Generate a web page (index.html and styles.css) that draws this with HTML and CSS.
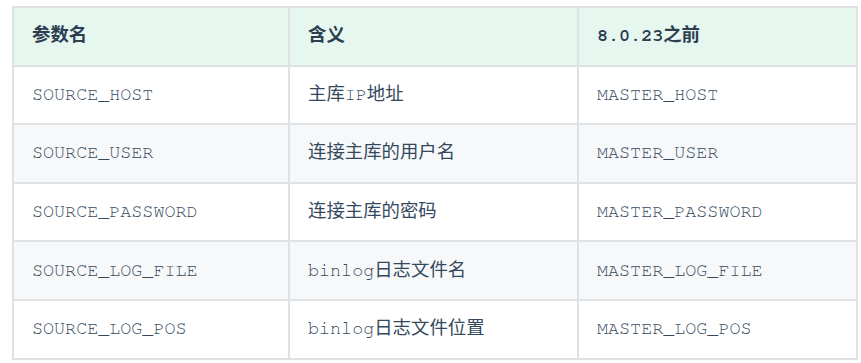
FILE: index.html
```html
<!DOCTYPE html>
<html>
<head>
<meta charset="utf-8">
<link rel="stylesheet" href="styles.css">
</head>
<body>
<table class="params">
  <colgroup>
    <col class="c1">
    <col class="c2">
    <col class="c3">
  </colgroup>
  <thead>
    <tr><th>参数名</th><th>含义</th><th>8.0.23之前</th></tr>
  </thead>
  <tbody>
    <tr><td>SOURCE_HOST</td><td>主库IP地址</td><td>MASTER_HOST</td></tr>
    <tr><td>SOURCE_USER</td><td>连接主库的用户名</td><td>MASTER_USER</td></tr>
    <tr><td>SOURCE_PASSWORD</td><td>连接主库的密码</td><td>MASTER_PASSWORD</td></tr>
    <tr><td>SOURCE_LOG_FILE</td><td>binlog日志文件名</td><td>MASTER_LOG_FILE</td></tr>
    <tr><td>SOURCE_LOG_POS</td><td>binlog日志文件位置</td><td>MASTER_LOG_POS</td></tr>
  </tbody>
</table>
</body>
</html>
```
FILE: styles.css
```css
html, body {
  margin: 0;
  padding: 0;
  background: #ffffff;
}
body {
  padding: 6px 0 0 12px;
}
.params {
  border-collapse: collapse;
  table-layout: fixed;
  width: 846px;
  font-family: "Nimbus Mono PS", "Nimbus Mono L", "FreeMono", "Courier", "Liberation Mono", "Noto Sans CJK SC", monospace;
  font-size: 18.4px;
  color: #34495e;
}
.params .c1 { width: 276px; }
.params .c2 { width: 289px; }
.params .c3 { width: 279px; }
.params th,
.params td {
  border: 2px solid #dfe2e5;
  height: 56.6px;
  padding: 0 0 0 18px;
  text-align: left;
  vertical-align: middle;
  line-height: 26px;
  white-space: nowrap;
}
.params th {
  background: #e6f7f0;
  font-weight: bold;
  color: #2c3e50;
}
.params tbody tr:nth-child(2n) {
  background: #f7f8f9;
}
```
